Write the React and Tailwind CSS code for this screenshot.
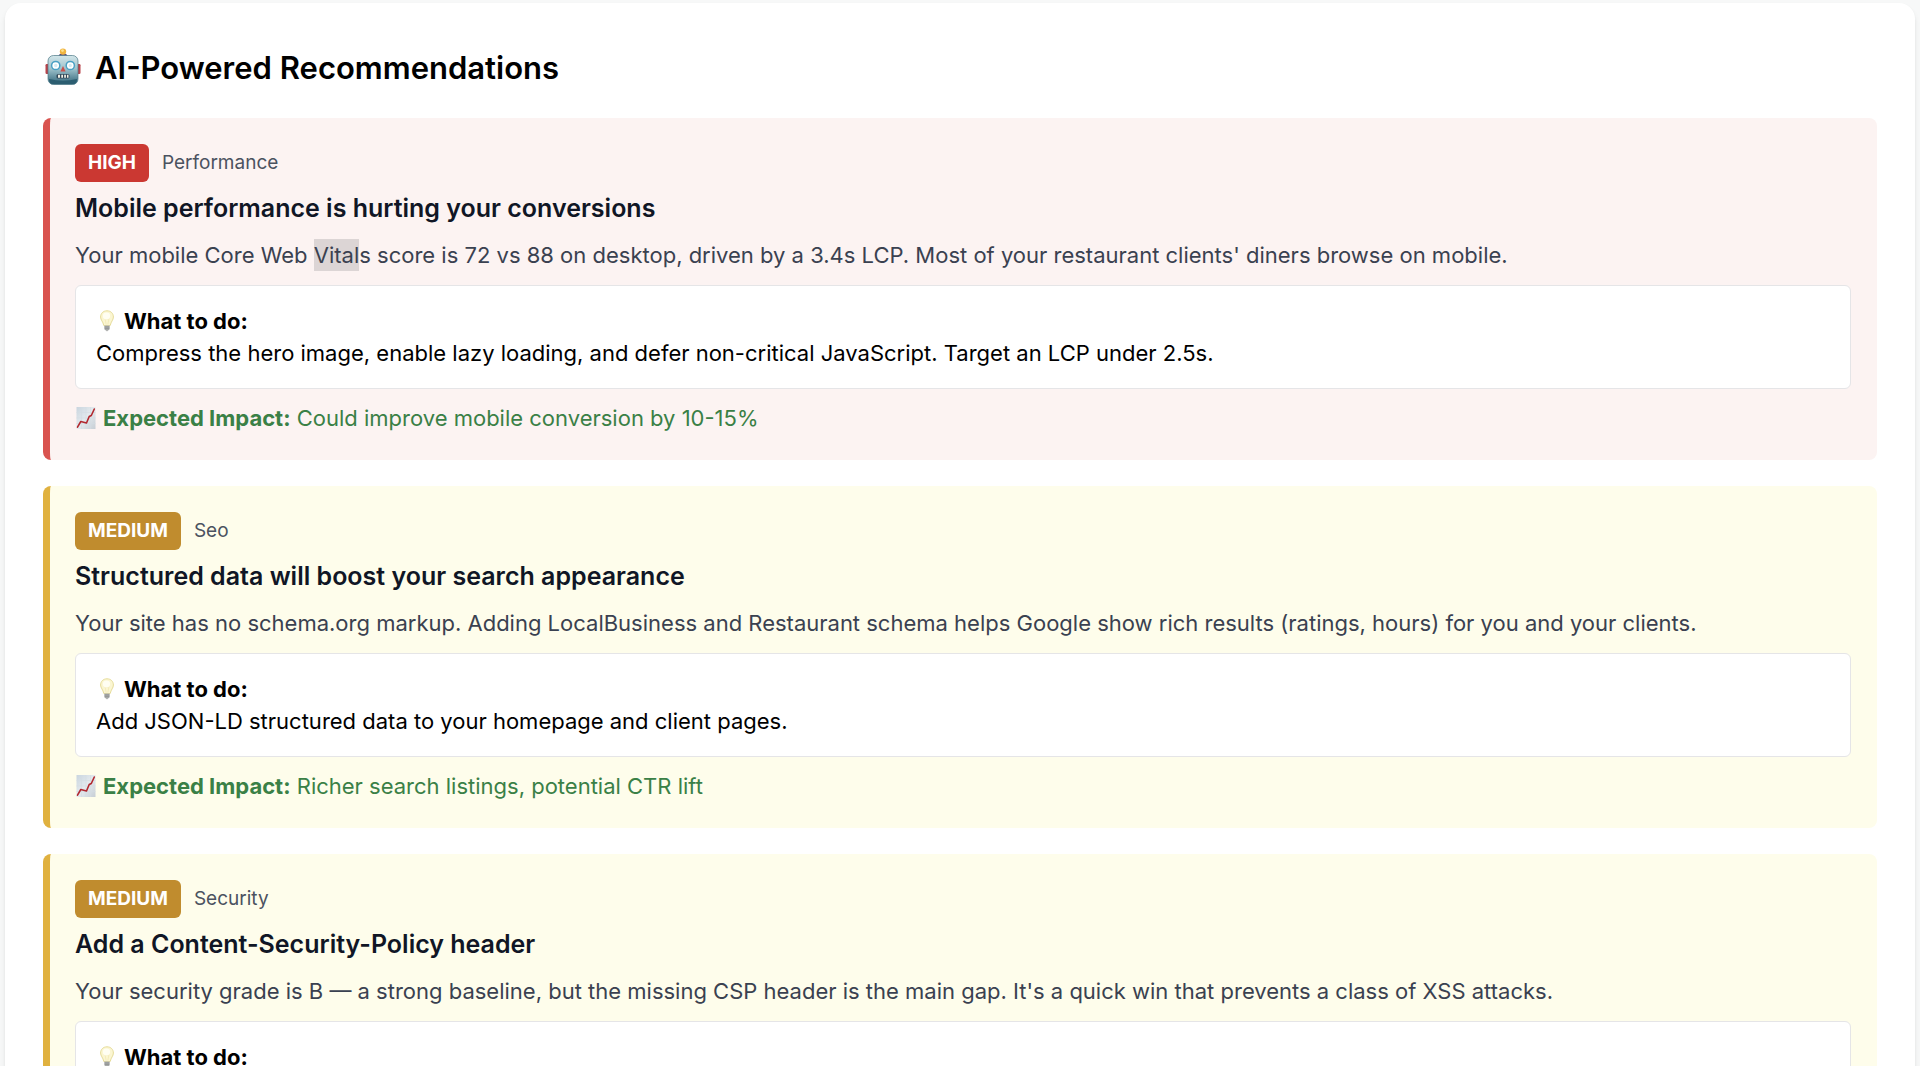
import React from "react";

const recommendations = [
  {
    id: 1,
    priority: "high",
    category: "Performance",
    title: "Mobile performance is hurting your conversions",
    description: (
      <>
        Your mobile Core Web <mark className="inline-block bg-[#dcd5d5] text-inherit">Vital</mark>s
        score is 72 vs 88 on desktop, driven by a 3.4s LCP. Most of your
        restaurant clients' diners browse on mobile.
      </>
    ),
    action:
      "Compress the hero image, enable lazy loading, and defer non-critical JavaScript. Target an LCP under 2.5s.",
    impact: "Could improve mobile conversion by 10-15%",
  },
  {
    id: 2,
    priority: "medium",
    category: "Seo",
    title: "Structured data will boost your search appearance",
    description:
      "Your site has no schema.org markup. Adding LocalBusiness and Restaurant schema helps Google show rich results (ratings, hours) for you and your clients.",
    action: "Add JSON-LD structured data to your homepage and client pages.",
    impact: "Richer search listings, potential CTR lift",
  },
  {
    id: 3,
    priority: "medium",
    category: "Security",
    title: "Add a Content-Security-Policy header",
    description:
      "Your security grade is B — a strong baseline, but the missing CSP header is the main gap. It's a quick win that prevents a class of XSS attacks.",
  },
];

const cardStyles = {
  high: "border-[#d9534f] bg-[#fcf3f2]",
  medium: "border-[#e0b13f] bg-[#fefdeb]",
};

const badgeStyles = {
  high: "bg-[#cb3832]",
  medium: "bg-[#c08c2e]",
};

function RobotIcon() {
  return (
    <svg className="h-10 w-10 shrink-0" viewBox="-2 0 40 40" aria-hidden="true">
      <defs>
        <linearGradient id="robotFace" x1="0" y1="0" x2="0" y2="1">
          <stop offset="0" stopColor="#d3e6ea" />
          <stop offset="0.45" stopColor="#9fc3cc" />
          <stop offset="1" stopColor="#2f6478" />
        </linearGradient>
      </defs>
      <rect x="0.5" y="16" width="4" height="10" rx="1.2" fill="#b8434a" />
      <rect x="31.5" y="16" width="4" height="10" rx="1.2" fill="#b8434a" />
      <path d="M13.5 8.5Q13.5 5.5 18 5.5Q22.5 5.5 22.5 8.5Z" fill="#5a4a78" />
      <circle cx="18" cy="3.6" r="3.2" fill="#f0b440" />
      <circle cx="17.5" cy="2.6" r="1.4" fill="#fbe08a" />
      <rect x="3" y="7.5" width="30" height="29" rx="5.5" fill="url(#robotFace)" stroke="#4b7785" strokeWidth="0.7" />
      <path d="M4 31Q18 34.5 32 31V32Q31.5 36 27.5 36H8.5Q4.5 36 4 32Z" fill="#2b5d70" />
      <circle cx="10.7" cy="17.5" r="4.1" fill="#fff" stroke="#4aa0c4" strokeWidth="1.5" />
      <circle cx="25.3" cy="17.5" r="4.1" fill="#fff" stroke="#4aa0c4" strokeWidth="1.5" />
      <circle cx="10.7" cy="17.5" r="1.7" fill="#d5ebf2" />
      <circle cx="25.3" cy="17.5" r="1.7" fill="#d5ebf2" />
      <path d="M18 18L20.6 23.5H15.4Z" fill="#c9504c" />
      <rect x="11.5" y="26" width="13" height="4.6" rx="1.6" fill="#32495a" />
      <path d="M13 26.8h2v3h-2zM16.3 26.8h1.7v3h-1.7zM19.2 26.8h1.7v3h-1.7zM22 26.8h1.5v3H22z" fill="#f3f2e6" />
    </svg>
  );
}

function BulbIcon() {
  return (
    <svg className="h-[22px] w-[22px] shrink-0" viewBox="0 0 22 22" aria-hidden="true">
      <path
        d="M11 0.8C7 0.8 4.6 3.6 4.6 7C4.6 10 7 11.5 7.8 15.5H14.2C15 11.5 17.4 10 17.4 7C17.4 3.6 15 0.8 11 0.8Z"
        fill="#fbf6d2"
        stroke="#e6dc9a"
        strokeWidth="1"
      />
      <path d="M9 8.5L10.2 14.5M13 8.5L11.8 14.5M9 8.5Q11 10.5 13 8.5" fill="none" stroke="#f0e7b0" strokeWidth="0.7" />
      <ellipse cx="10.5" cy="6" rx="3.6" ry="3.4" fill="#fffef2" />
      <path d="M8.4 15.5H13.6V19Q13.3 20 12.5 20Q12.3 21.3 11 21.3Q9.7 21.3 9.5 20Q8.7 20 8.4 19Z" fill="#b4b6b5" />
      <path d="M8.4 17H13.6M8.6 18.8H13.4" stroke="#77797a" strokeWidth="0.7" />
    </svg>
  );
}

function ChartIcon() {
  return (
    <svg className="h-[22px] w-[21px] shrink-0" viewBox="-1 0 21 22" aria-hidden="true">
      <defs>
        <linearGradient id="chartPaper" x1="0" y1="0" x2="1" y2="1">
          <stop offset="0" stopColor="#c9d5df" />
          <stop offset="0.5" stopColor="#e4eaee" />
          <stop offset="1" stopColor="#c7ced5" />
        </linearGradient>
      </defs>
      <rect x="0.5" y="0" width="19" height="22" fill="url(#chartPaper)" />
      <path d="M5.5 0V22M10 0V22M14.5 0V22M0.5 5.5H19.5M0.5 11H19.5M0.5 16.5H19.5" stroke="#d3dce3" strokeWidth="0.6" />
      <path d="M1.5 20.2L4.8 14.5L10.5 16L13.2 9.5L15.3 8.5L18.3 2" fill="none" stroke="#b2282f" strokeWidth="1.6" strokeLinejoin="round" strokeLinecap="round" />
    </svg>
  );
}

function Recommendation({ item }) {
  return (
    <article className={`rounded-lg border-l-[7px] py-[26px] pr-[26px] pl-[25px] ${cardStyles[item.priority]}`}>
      <div className="flex items-center gap-[13px]">
        <span className={`rounded-md px-[13px] text-[19px] leading-[38px] font-bold text-white ${badgeStyles[item.priority]}`}>
          {item.priority.toUpperCase()}
        </span>
        <span className="text-[19px] leading-[38px] text-[#4b5260]">{item.category}</span>
      </div>
      <h3 className="mt-2 text-[25px] leading-9 font-semibold text-[#101625]">{item.title}</h3>
      <p className="mt-[13px] text-[22px] leading-8 text-[#3a4150]">{item.description}</p>
      <div className="mt-[14px] rounded-md border border-[#e5e5e7] bg-white px-5 py-[19px] text-[22px] leading-8 text-black">
        <div className="flex items-center gap-[6px]">
          <BulbIcon />
          <strong className="font-bold">What to do:</strong>
        </div>
        {item.action && <p>{item.action}</p>}
      </div>
      {item.impact && (
        <div className="mt-[13px] flex items-center gap-[7px] text-[22px] leading-8 text-[#3a8046]">
          <ChartIcon />
          <p>
            <strong className="font-bold">Expected Impact:</strong> {item.impact}
          </p>
        </div>
      )}
    </article>
  );
}

function App() {
  return (
    <div className="min-h-screen bg-[#f7f8f8] px-[5px] pt-[3px] font-['Inter',sans-serif]">
      <main className="rounded-2xl bg-white px-[38px] pt-[39px] pb-10 shadow-md">
        <h2 className="flex items-center gap-3 text-[31px] leading-[52px] font-semibold text-black">
          <RobotIcon />
          AI-Powered Recommendations
        </h2>
        <div className="mt-6 flex flex-col gap-[26px]">
          {recommendations.map((item) => (
            <Recommendation key={item.id} item={item} />
          ))}
        </div>
      </main>
    </div>
  );
}

export default App;
